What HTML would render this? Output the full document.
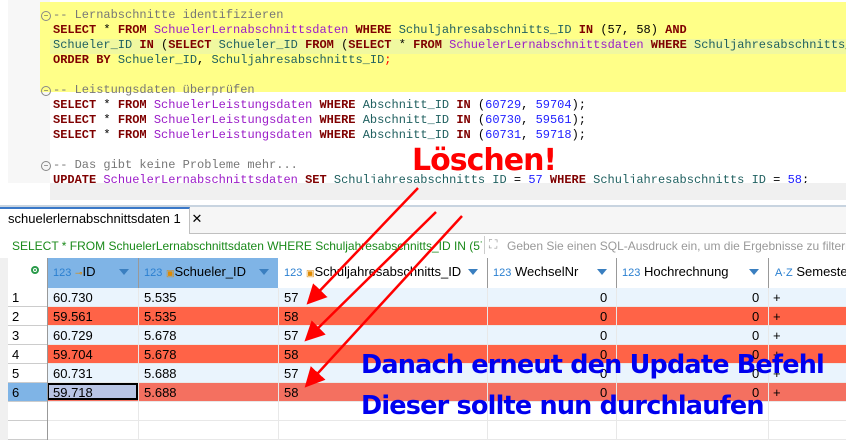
<!DOCTYPE html>
<html><head><meta charset="utf-8"><style>
body{margin:0;width:846px;height:440px;overflow:hidden;background:#fff;position:relative;font-family:"Liberation Sans",sans-serif}
.abs{position:absolute}
.code{position:absolute;left:53px;font-family:"Liberation Mono",monospace;font-size:12px;white-space:pre;line-height:15px}
.k{color:#7f0000;font-weight:bold}.t{color:#9b1cc8}.c{color:#777}.i{color:#206060}.n{color:#2020ff}
.fold{position:absolute;left:41px;width:8px;height:8px;border:1px solid #888;border-radius:50%;font-size:8px;line-height:8px;text-align:center;color:#555}
.cell{position:absolute;font-size:13px;color:#000;line-height:19px;white-space:nowrap}
.hd{font-size:13px}
</style></head><body>
<div class="abs" style="left:0;top:0;width:8px;height:200px;background:#fff"></div>
<div class="abs" style="left:8px;top:0;width:42px;height:183px;background:#f7f7f7"></div>
<div class="abs" style="left:40px;top:2px;width:806px;height:90px;background:#ffff88"></div>
<div class="abs" style="left:50px;top:39px;width:796px;height:15px;background:#f0f8a0"></div>
<div class="fold" style="top:11px">−</div>
<div class="fold" style="top:86px">−</div>
<div class="fold" style="top:161px">−</div>
<div class="code" style="top:8px"><span class="c">-- Lernabschnitte identifizieren</span></div>
<div class="code" style="top:23px"><span class="k">SELECT</span> * <span class="k">FROM</span> <span class="t">SchuelerLernabschnittsdaten</span> <span class="k">WHERE</span> <span class="i">Schuljahresabschnitts_ID</span> <span class="k">IN</span> (57, 58) <span class="k">AND</span></div>
<div class="code" style="top:38px"><span class="i">Schueler_ID</span> <span class="k">IN</span> (<span class="k">SELECT</span> <span class="i">Schueler_ID</span> <span class="k">FROM</span> (<span class="k">SELECT</span> * <span class="k">FROM</span> <span class="t">SchuelerLernabschnittsdaten</span> <span class="k">WHERE</span> <span class="i">Schuljahresabschnitts_ID</span></div>
<div class="code" style="top:53px"><span class="k">ORDER BY</span> <span class="i">Schueler_ID</span>, <span class="i">Schuljahresabschnitts_ID</span><span style="color:red">;</span></div>
<div class="code" style="top:83px"><span class="c">-- Leistungsdaten überprüfen</span></div>
<div class="code" style="top:98px"><span class="k">SELECT</span> * <span class="k">FROM</span> <span class="t">SchuelerLeistungsdaten</span> <span class="k">WHERE</span> <span class="i">Abschnitt_ID</span> <span class="k">IN</span> (<span class="n">60729</span>, <span class="n">59704</span>);</div>
<div class="code" style="top:113px"><span class="k">SELECT</span> * <span class="k">FROM</span> <span class="t">SchuelerLeistungsdaten</span> <span class="k">WHERE</span> <span class="i">Abschnitt_ID</span> <span class="k">IN</span> (<span class="n">60730</span>, <span class="n">59561</span>);</div>
<div class="code" style="top:128px"><span class="k">SELECT</span> * <span class="k">FROM</span> <span class="t">SchuelerLeistungsdaten</span> <span class="k">WHERE</span> <span class="i">Abschnitt_ID</span> <span class="k">IN</span> (<span class="n">60731</span>, <span class="n">59718</span>);</div>
<div class="code" style="top:158px"><span class="c">-- Das gibt keine Probleme mehr...</span></div>
<div class="code" style="top:173px"><span class="k">UPDATE</span> <span class="t">SchuelerLernabschnittsdaten</span> <span class="k">SET</span> <span class="i">Schuljahresabschnitts_ID</span> = <span class="n">57</span> <span class="k">WHERE</span> <span class="i">Schuljahresabschnitts_ID</span> = <span class="n">58</span>;</div>
<div class="abs" style="left:50px;top:183px;width:796px;height:17px;background:#f0f0f0"></div>
<div class="abs" style="left:0;top:200px;width:846px;height:5px;background:#fff"></div>
<div class="abs" style="left:0;top:205px;width:846px;height:2px;background:#c8d4e0"></div>
<div class="abs" style="left:0;top:207px;width:846px;height:26px;background:#f6f6f6;border-bottom:1px solid #c0c0c0"></div>
<div class="abs" style="left:0;top:207px;width:190px;height:27px;background:#fff;border-top:2px solid #3a78c8;border-right:1px solid #c0c0c0;box-sizing:border-box"></div>
<div class="abs" style="left:8px;top:211px;font-size:13px;color:#000;white-space:nowrap">schuelerlernabschnittsdaten 1&nbsp;&nbsp;&nbsp;✕</div>
<div class="abs" style="left:0;top:234px;width:846px;height:24px;background:#fff;border-bottom:1px solid #ccc"></div>
<div class="abs" style="left:12px;top:239px;width:470px;overflow:hidden;font-size:12px;color:#1a8a1a;white-space:nowrap">SELECT * FROM SchuelerLernabschnittsdaten WHERE Schuljahresabschnitts_ID IN (57, 58</div>
<div class="abs" style="left:484px;top:236px;width:1px;height:18px;background:#ccc"></div>
<div class="abs" style="left:489px;top:237px;font-size:12px;color:#999">⛶</div>
<div class="abs" style="left:507px;top:239px;font-size:12px;color:#999;white-space:nowrap">Geben Sie einen SQL-Ausdruck ein, um die Ergebnisse zu filtern (</div>
<div class="abs" style="left:0;top:258px;width:8px;height:182px;background:#f0f0f0"></div>
<div class="abs" style="left:8px;top:258px;width:39px;height:30px;background:#fff;border-bottom:1px solid #999"></div>
<div class="abs" style="left:31px;top:266px;width:8px;height:8px;border:2px solid #2a9a4a;border-radius:50%;box-sizing:border-box;background:radial-gradient(#2a9a4a 30%,#fff 35%)"></div>
<div class="abs" style="left:47px;top:258px;width:231px;height:30px;background:#7fb4e6"></div>
<div class="abs" style="left:278px;top:258px;width:568px;height:30px;background:#fff;border-bottom:1px solid #999"></div>
<div class="abs" style="left:138px;top:258px;width:1px;height:30px;background:#999"></div>
<div class="abs" style="left:487px;top:258px;width:1px;height:30px;background:#999"></div>
<div class="abs" style="left:616px;top:258px;width:1px;height:30px;background:#999"></div>
<div class="abs" style="left:768px;top:258px;width:1px;height:30px;background:#999"></div>
<div class="cell hd" style="left:53px;top:262px"><span style="color:#2a7fd0;font-size:11px">123</span> <span style="color:#e08a00;font-size:9px">⊸</span>ID</div>
<div class="cell hd" style="left:144px;top:262px"><span style="color:#2a7fd0;font-size:11px">123</span> <span style="color:#e08a00;font-size:9px">▣</span>Schueler_ID</div>
<div class="cell hd" style="left:284px;top:262px"><span style="color:#2a7fd0;font-size:11px">123</span> <span style="color:#e08a00;font-size:9px">▣</span>Schuljahresabschnitts_ID</div>
<div class="cell hd" style="left:493px;top:262px"><span style="color:#2a7fd0;font-size:11px">123</span> WechselNr</div>
<div class="cell hd" style="left:622px;top:262px"><span style="color:#2a7fd0;font-size:11px">123</span> Hochrechnung</div>
<div class="cell hd" style="left:775px;top:262px"><span style="color:#2a7fd0;font-size:11px">A·Z</span> SemesterW</div>
<div class="abs" style="left:119px;top:269px;border:5px solid transparent;border-top:6px solid #3a7fc0;border-bottom:0"></div>
<div class="abs" style="left:259px;top:269px;border:5px solid transparent;border-top:6px solid #3a7fc0;border-bottom:0"></div>
<div class="abs" style="left:468px;top:269px;border:5px solid transparent;border-top:6px solid #3a7fc0;border-bottom:0"></div>
<div class="abs" style="left:597px;top:269px;border:5px solid transparent;border-top:6px solid #3a7fc0;border-bottom:0"></div>
<div class="abs" style="left:749px;top:269px;border:5px solid transparent;border-top:6px solid #3a7fc0;border-bottom:0"></div>
<div id="rows"></div>
<script>
var d=[["60.730","5.535","57"],["59.561","5.535","58"],["60.729","5.678","57"],["59.704","5.678","58"],["60.731","5.688","57"],["59.718","5.688","58"]];
var h="";for(var r=0;r<8;r++){var y=288+r*19;
var bg=r>=6?"#fff":(r%2?"#ff6347":"#eaf4fd");if(r==5)bg="#f47060";
h+='<div class="abs" style="left:8px;top:'+y+'px;width:39px;height:18px;background:'+(r==5?"#7fb4e6":"#fff")+';border-bottom:1px solid #ccc"></div>';
h+='<div class="abs" style="left:47px;top:'+y+'px;width:799px;height:18px;background:'+bg+';border-bottom:1px solid #e8e8e8"></div>';
[138,278,487,616,768].forEach(function(x){h+='<div class="abs" style="left:'+x+'px;top:'+y+'px;width:1px;height:19px;background:#e8e8e8"></div>'});
if(r<6){h+='<div class="cell" style="left:12px;top:'+y+'px">'+(r+1)+'</div>';
h+='<div class="cell" style="left:53px;top:'+y+'px">'+d[r][0]+'</div><div class="cell" style="left:144px;top:'+y+'px">'+d[r][1]+'</div><div class="cell" style="left:284px;top:'+y+'px">'+d[r][2]+'</div>';
h+='<div class="cell" style="left:600px;top:'+y+'px">0</div><div class="cell" style="left:752px;top:'+y+'px">0</div><div class="cell" style="left:773px;top:'+y+'px">+</div>';}}
h+='<div class="abs" style="left:47px;top:383px;width:91px;height:17px;background:#b8c4e4;border:2px solid #000;box-sizing:border-box"></div><div class="cell" style="left:53px;top:383px">59.718</div>';
h+='<div class="abs" style="left:47px;top:258px;width:1px;height:182px;background:#999"></div>';
document.getElementById("rows").innerHTML=h;
</script>
<svg class="abs" style="left:0;top:0" width="846" height="440">
<defs><marker id="a" markerWidth="8" markerHeight="8" refX="6" refY="4" orient="auto" markerUnits="strokeWidth"><path d="M0,0L8,4L0,8z" fill="#f00"/></marker></defs>
<g stroke="#f00" stroke-width="2.5" fill="none">
<line x1="418" y1="188" x2="310" y2="301" marker-end="url(#a)"/>
<line x1="436" y1="212" x2="308" y2="338" marker-end="url(#a)"/>
<line x1="462" y1="216" x2="308" y2="384" marker-end="url(#a)"/>
</g></svg>
<div class="abs" style="left:412px;top:143px;font-size:30px;font-weight:bold;color:#f00;letter-spacing:-1px;font-family:'DejaVu Sans',sans-serif">Löschen!</div>
<div class="abs" style="left:361px;top:350px;font-size:25.5px;font-weight:bold;color:#0000ee;white-space:nowrap;font-family:'DejaVu Sans',sans-serif;letter-spacing:-0.8px">Danach erneut den Update Befehl</div>
<div class="abs" style="left:361px;top:391px;font-size:25.5px;font-weight:bold;color:#0000ee;white-space:nowrap;font-family:'DejaVu Sans',sans-serif;letter-spacing:-0.8px">Dieser sollte nun durchlaufen</div>
</body></html>
